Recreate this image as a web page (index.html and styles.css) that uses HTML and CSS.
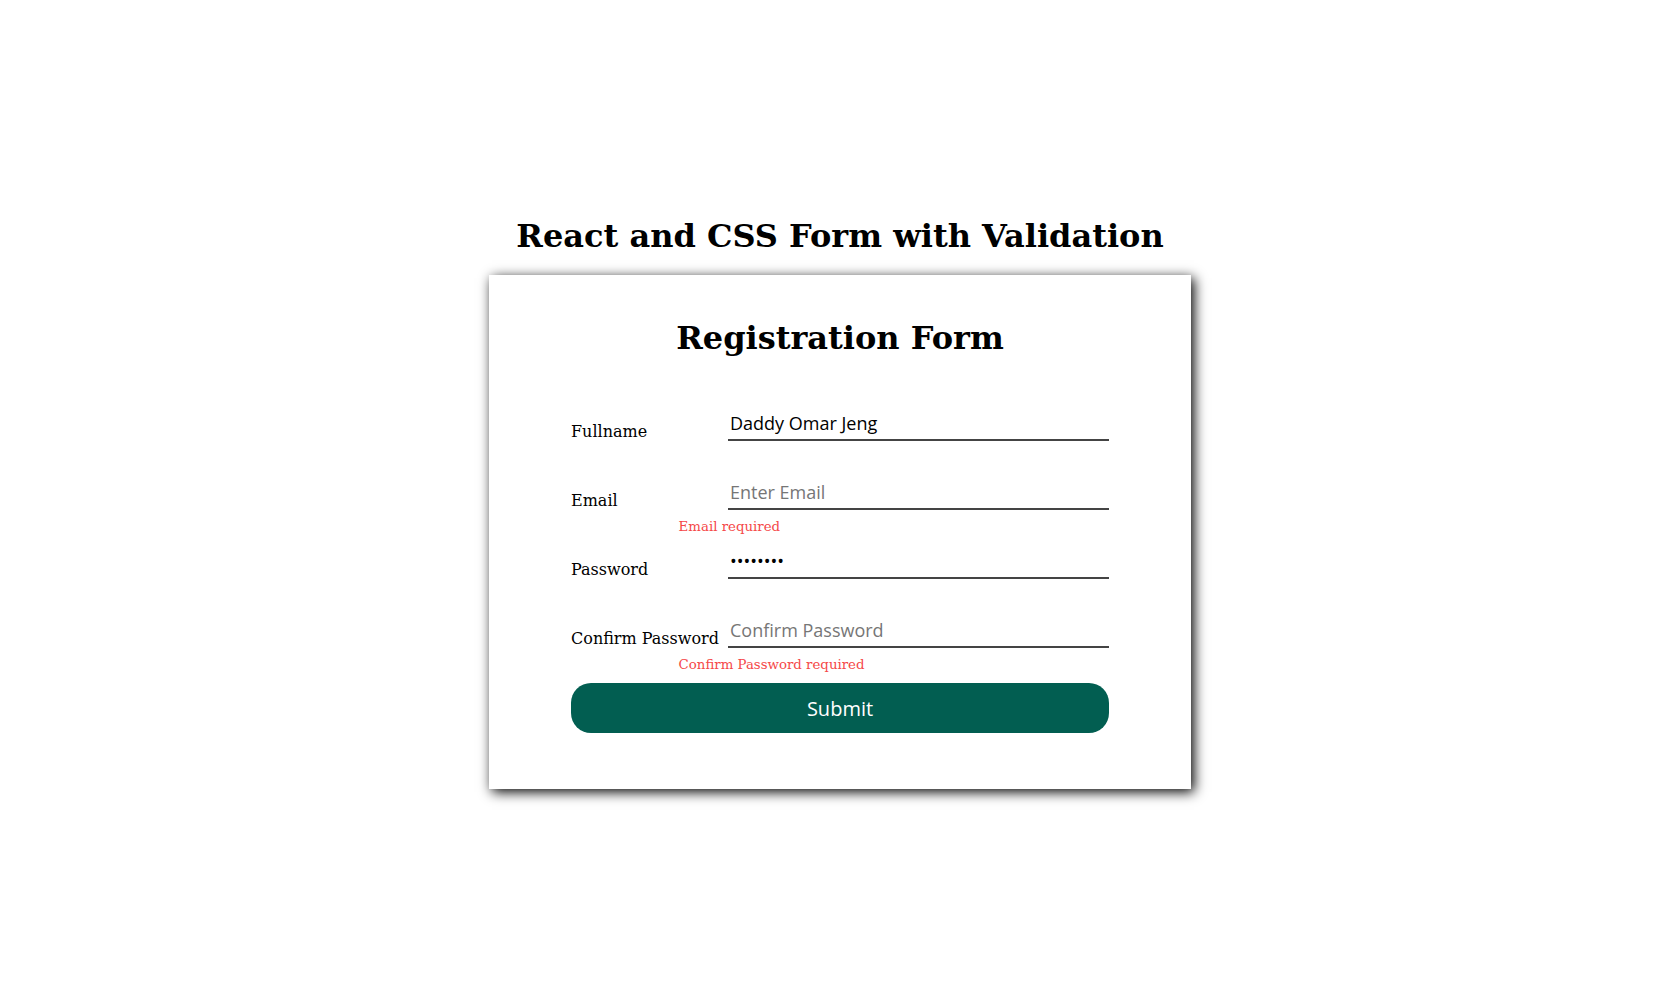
FILE: index.html
```html
<!DOCTYPE html>
<html lang="en">
<head>
<meta charset="utf-8">
<title>React and CSS Form with Validation</title>
<link rel="stylesheet" href="styles.css">
</head>
<body>
<div class="page">
  <h1 class="title">React and CSS Form with Validation</h1>
  <div class="card">
    <h2 class="card-title">Registration Form</h2>
    <form class="form">
      <div class="group">
        <div class="row">
          <label class="label" for="fullname">Fullname</label>
          <input class="input" id="fullname" type="text" value="Daddy Omar Jeng" placeholder="Enter Fullname">
        </div>
      </div>
      <div class="group">
        <div class="row">
          <label class="label" for="email">Email</label>
          <input class="input" id="email" type="email" placeholder="Enter Email">
        </div>
        <p class="error">Email required</p>
      </div>
      <div class="group">
        <div class="row">
          <label class="label" for="password">Password</label>
          <input class="input" id="password" type="password" value="12345678" placeholder="Enter Password">
        </div>
      </div>
      <div class="group">
        <div class="row">
          <label class="label" for="confirm">Confirm Password</label>
          <input class="input" id="confirm" type="password" placeholder="Confirm Password">
        </div>
        <p class="error">Confirm Password required</p>
      </div>
      <button class="submit" type="button">Submit</button>
    </form>
  </div>
</div>
</body>
</html>
```
FILE: styles.css
```css
html, body {
  margin: 0;
  padding: 0;
  background: #ffffff;
}

body {
  font-family: "DejaVu Serif", serif;
  color: #000;
}

.page {
  box-sizing: border-box;
  min-height: 100vh;
  padding: 217px 0 60px;
  display: flex;
  flex-direction: column;
  align-items: center;
}

.title {
  margin: 0 0 20px;
  font-family: "DejaVu Serif", serif;
  font-size: 32px;
  font-weight: bold;
  line-height: normal;
}

.card {
  box-sizing: border-box;
  width: 702px;
  padding: 44px 82px 56px;
  background: #fff;
  box-shadow: 3px 3px 12px #000;
}

.card-title {
  margin: 0 0 50px;
  text-align: center;
  font-family: "DejaVu Serif", serif;
  font-size: 32px;
  font-weight: bold;
  line-height: normal;
}

.form {
  display: flex;
  flex-direction: column;
}

.group {
  height: 69px;
}

.row {
  display: flex;
  align-items: flex-end;
}

.label {
  flex: 0 0 157px;
  font-family: "DejaVu Serif", serif;
  font-size: 16px;
  line-height: normal;
}

.input {
  flex: 1;
  min-width: 0;
  margin: 0;
  padding: 4px 2px 4px;
  border: none;
  border-bottom: 2px solid #444;
  border-radius: 0;
  outline: none;
  background: transparent;
  font-family: "Open Sans", sans-serif;
  font-size: 18px;
  line-height: normal;
  color: #000;
}

.input::placeholder {
  color: #767676;
}

.error {
  margin: 9px 0 0 20%;
  font-family: "DejaVu Serif", serif;
  font-size: 13.33px;
  line-height: normal;
  color: #f54848;
}

.submit {
  height: 50px;
  width: 100%;
  border: none;
  border-radius: 20px;
  background: #025e51;
  color: #fff;
  font-family: "Open Sans", sans-serif;
  font-size: 20px;
  cursor: pointer;
}
```
